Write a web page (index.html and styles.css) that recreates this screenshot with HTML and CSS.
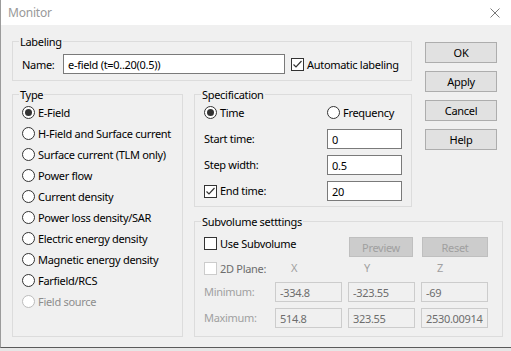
FILE: index.html
```html
<!DOCTYPE html>
<html lang="en">
<head>
    <meta charset="UTF-8">
    <meta name="viewport" content="width=device-width, initial-scale=1.0">
    <title>Monitor</title>
    <link rel="stylesheet" href="styles.css">
</head>
<body>
    <div class="window">
        <div class="titlebar">
            <span class="title">Monitor</span>
            <svg class="close" width="10" height="10" viewBox="0 0 10 10">
                <path d="M0.5 0.5 L9.5 9.5 M9.5 0.5 L0.5 9.5" stroke="#7a7a7a" stroke-width="1" fill="none"/>
            </svg>
        </div>

        <div class="dialog">
            <fieldset class="labeling">
                <legend>Labeling</legend>
                <div class="labeling-body">
                    <label class="name-label" for="name">Name:</label>
                    <input class="edit name-edit" type="text" id="name" value="e-field (t=0..20(0.5))">
                    <label class="opt auto">
                        <span class="check"><svg width="11" height="11" viewBox="0 0 11 11"><path d="M1.5 5.5 L4 8 L9.5 2" stroke="#333" stroke-width="1.2" fill="none"/></svg></span>
                        Automatic labeling
                    </label>
                </div>
            </fieldset>

            <div class="buttons">
                <button class="btn">OK</button>
                <button class="btn">Apply</button>
                <button class="btn">Cancel</button>
                <button class="btn">Help</button>
            </div>

            <fieldset class="type">
                <legend>Type</legend>
                <div class="type-body">
                    <label class="opt row"><span class="radio on"></span>E-Field</label>
                    <label class="opt row"><span class="radio"></span>H-Field and Surface current</label>
                    <label class="opt row"><span class="radio"></span>Surface current (TLM only)</label>
                    <label class="opt row"><span class="radio"></span>Power flow</label>
                    <label class="opt row"><span class="radio"></span>Current density</label>
                    <label class="opt row"><span class="radio"></span>Power loss density/SAR</label>
                    <label class="opt row"><span class="radio"></span>Electric energy density</label>
                    <label class="opt row"><span class="radio"></span>Magnetic energy density</label>
                    <label class="opt row"><span class="radio"></span>Farfield/RCS</label>
                    <label class="opt row disabled"><span class="radio"></span>Field source</label>
                </div>
            </fieldset>

            <fieldset class="spec">
                <legend>Specification</legend>
                <div class="spec-body">
                    <label class="opt row"><span class="radio on"></span>Time</label>
                    <label class="opt row"><span class="radio"></span>Frequency</label>

                    <span class="field-label">Start time:</span>
                    <input class="edit" type="text" value="0">

                    <span class="field-label">Step width:</span>
                    <input class="edit" type="text" value="0.5">

                    <label class="opt field-label">
                        <span class="check"><svg width="11" height="11" viewBox="0 0 11 11"><path d="M1.5 5.5 L4 8 L9.5 2" stroke="#333" stroke-width="1.2" fill="none"/></svg></span>
                        End time:
                    </label>
                    <input class="edit" type="text" value="20">
                </div>
            </fieldset>

            <fieldset class="subvolume">
                <legend>Subvolume setttings</legend>
                <div class="sub-body">
                    <label class="opt use-sub"><span class="check"></span>Use Subvolume</label>
                    <button class="btn small preview" disabled>Preview</button>
                    <button class="btn small reset" disabled>Reset</button>

                    <label class="opt plane"><span class="check off"></span>2D Plane:</label>
                    <span class="axis">X</span>
                    <span class="axis">Y</span>
                    <span class="axis">Z</span>

                    <span class="dim-label">Minimum:</span>
                    <input class="edit" type="text" value="-334.8" disabled>
                    <input class="edit" type="text" value="-323.55" disabled>
                    <input class="edit" type="text" value="-69" disabled>

                    <span class="dim-label">Maximum:</span>
                    <input class="edit" type="text" value="514.8" disabled>
                    <input class="edit" type="text" value="323.55" disabled>
                    <input class="edit" type="text" value="2530.009146" disabled>
                </div>
            </fieldset>
        </div>
    </div>
</body>
</html>
```

FILE: styles.css
```css
*{
    box-sizing: border-box;
}
body{
    margin: 0;
    background-color: #e6e6e6;
    font-family: "Noto Sans", "Open Sans", sans-serif;
    font-size: 11px;
    letter-spacing: -0.3px;
    line-height: 15px;
    color: #000;
}
.window{
    width: 511px;
    height: 348px;
    background-color: #f0f0f0;
    border-left: 1px solid #9b9b9b;
    border-bottom: 1px solid #5a5a5a;
    overflow: hidden;
}
.titlebar{
    height: 25px;
    background-color: #fff;
    display: flex;
    align-items: center;
    justify-content: space-between;
    padding: 0 11px 0 7px;
}
.title{
    color: #999;
    font-size: 12px;
    letter-spacing: -0.2px;
}

/* dialog grid */
.dialog{
    display: grid;
    grid-template-columns: 171px 218px 88px;
    column-gap: 11px;
    padding: 9px 0 0 11px;
}
fieldset{
    margin: 0;
    padding: 0;
    min-width: 0;
    border: 1px solid #dcdcdc;
}
legend{
    padding: 0 1px;
    margin-left: 6px;
    line-height: 15px;
}
.labeling{
    grid-column: 1 / 3;
    grid-row: 1;
}
.buttons{
    grid-column: 3;
    grid-row: 1 / 3;
    display: flex;
    flex-direction: column;
    gap: 8px;
    margin: 8px 0 0 2px;
}
.type{
    grid-column: 1;
    grid-row: 2 / 4;
    margin-top: 6px;
}
.spec{
    grid-column: 2;
    grid-row: 2;
    margin-top: 6px;
}
.subvolume{
    grid-column: 2 / 4;
    grid-row: 3;
    margin-top: 7px;
    width: 309px;
}

/* controls */
.edit{
    height: 20px;
    border: 1px solid #7a7a7a;
    background-color: #fff;
    font: inherit;
    letter-spacing: inherit;
    color: #000;
    padding: 0 4px;
    margin: 0;
    min-width: 0;
    width: 100%;
    outline: none;
}
.edit:disabled{
    background-color: #f0f0f0;
    border-color: #cccccc;
    color: #6d6d6d;
}
.btn{
    width: 72px;
    height: 21px;
    margin: 0;
    padding: 0;
    border: 1px solid #adadad;
    background-color: #e1e1e1;
    font: inherit;
    letter-spacing: inherit;
    color: #000;
}
.btn:disabled{
    background-color: #cccccc;
    border-color: #bfbfbf;
    color: #a0a0a0;
}
.opt{
    display: flex;
    align-items: center;
    gap: 3px;
    white-space: nowrap;
}
.radio{
    flex: none;
    width: 13px;
    height: 13px;
    border: 1px solid #333;
    border-radius: 50%;
    background-color: #fff;
    display: grid;
    place-items: center;
}
.radio.on::after{
    content: "";
    width: 7px;
    height: 7px;
    border-radius: 50%;
    background-color: #333;
}
.check{
    flex: none;
    width: 13px;
    height: 13px;
    border: 1px solid #333;
    background-color: #fff;
    display: grid;
    place-items: center;
}
.check svg{
    display: block;
}
.check.off{
    border-color: #cccccc;
}
.disabled{
    color: #8d8d8d;
}
.disabled .radio{
    border-color: #bcbcbc;
}

/* labeling */
.labeling-body{
    display: flex;
    align-items: center;
    padding: 5px 0 6px 9px;
}
.name-label{
    width: 41px;
}
.name-edit{
    width: 222px;
}
.auto{
    margin-left: 6px;
}

/* type */
.type-body{
    display: flex;
    flex-direction: column;
    padding-left: 9px;
}
.row{
    height: 21px;
}

/* specification */
.spec-body{
    display: grid;
    grid-template-columns: 123px 75px;
    grid-template-rows: 27px 26px 26px 20px;
    align-items: start;
    padding: 0 9px 5px 9px;
}
.field-label{
    line-height: 20px;
    height: 20px;
}

/* subvolume */
.sub-body{
    display: grid;
    grid-template-columns: 65px 67px 67px 67px;
    grid-template-rows: 22px 24px 26px 20px;
    column-gap: 6px;
    align-items: start;
    padding: 7px 9px 8px 9px;
}
.use-sub{
    grid-column: 1 / 3;
}
.small{
    height: 20px;
    margin-top: 1px;
}
.preview{
    width: 64px;
    margin-left: 1px;
}
.reset{
    width: 66px;
    justify-self: end;
}
.plane{
    height: 20px;
    color: #6d6d6d;
}
.axis{
    line-height: 20px;
    padding-left: 16px;
    color: #a0a0a0;
}
.dim-label{
    line-height: 20px;
    color: #a0a0a0;
}
```
